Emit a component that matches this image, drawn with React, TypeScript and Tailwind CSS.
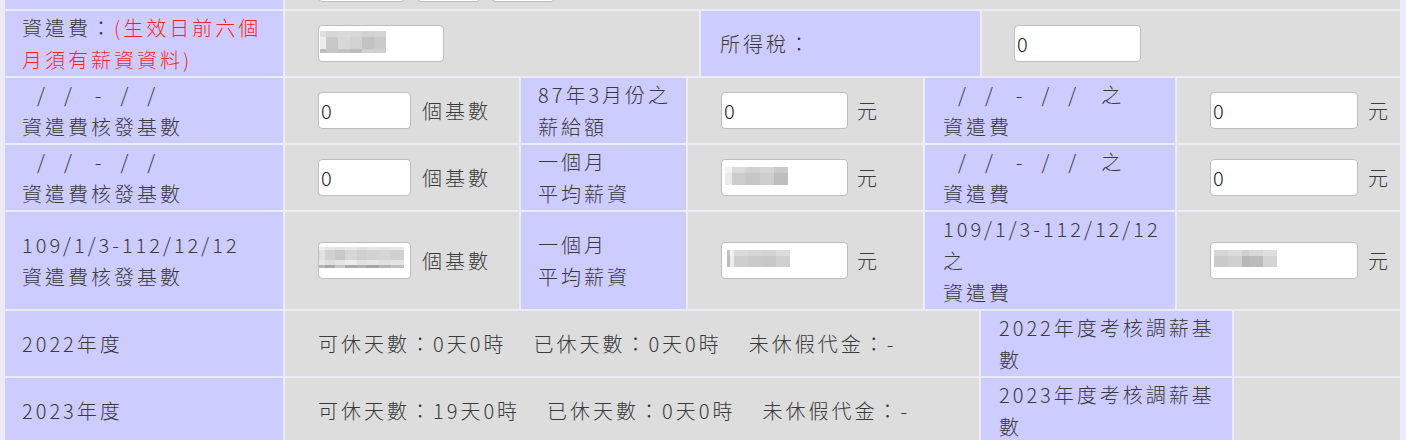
import React from "react";

type MosaicSpec = { cols: number[]; rows: number[]; colors: string[][] };

function Mosaic({ spec }: { spec: MosaicSpec }) {
  return (
    <div className="flex flex-col">
      {spec.rows.map((h, r) => (
        <div key={r} className="flex">
          {spec.cols.map((w, c) => (
            <span key={c} style={{ width: w, height: h, background: spec.colors[r][c] }} />
          ))}
        </div>
      ))}
    </div>
  );
}

function Field({ w, value }: { w: string; value: string }) {
  return (
    <input
      readOnly
      value={value}
      className={`${w} h-[37px] shrink-0 rounded-[4px] border border-[#bdbdbd] bg-white px-[2px] text-[20px] text-[#222] outline-none`}
    />
  );
}

function BlurField({ w, pl, pt, spec }: { w: string; pl: string; pt: string; spec: MosaicSpec }) {
  return (
    <div className={`${w} ${pl} ${pt} h-[37px] shrink-0 rounded-[4px] border border-[#bdbdbd] bg-white`}>
      <Mosaic spec={spec} />
    </div>
  );
}

function DateSpan({ suffix }: { suffix?: string }) {
  return (
    <div className="flex whitespace-nowrap">
      <span className="ml-[15px]">/</span>
      <span className="ml-[16px]">/</span>
      <span className="ml-[20px]">-</span>
      <span className="ml-[16px]">/</span>
      <span className="ml-[16px]">/</span>
      {suffix ? <span className="ml-[22px]">{suffix}</span> : null}
    </div>
  );
}

const m1: MosaicSpec = {
  cols: [6, 12, 12, 12, 12, 12],
  rows: [6, 12, 4],
  colors: [
    ["#dedede", "#d6d6d6", "#dadada", "#d8d8d8", "#d2d2d2", "#d5d5d5"],
    ["#ececec", "#c8c8c8", "#d8d8d8", "#d2d2d2", "#c2c2c2", "#cacaca"],
    ["#bdbdbd", "#c6c6c6", "#c2c2c2", "#bcbcbc", "#d0d0d0", "#cfcfcf"],
  ],
};

const m3d: MosaicSpec = {
  cols: [7, 14, 14, 14, 14],
  rows: [6, 12],
  colors: [
    ["#f3f3f3", "#dadada", "#d2d2d2", "#d6d6d6", "#cacaca"],
    ["#eaeaea", "#cccccc", "#c6c6c6", "#cecece", "#bdbdbd"],
  ],
};

const m4b: MosaicSpec = {
  cols: [6, 10, 10, 12, 10, 12, 12, 13],
  rows: [3, 10, 5, 3],
  colors: [
    ["#eeeeee", "#e6e6e6", "#e2e2e2", "#e8e8e8", "#e0e0e0", "#e6e6e6", "#e4e4e4", "#e8e8e8"],
    ["#e0e0e0", "#d0d0d0", "#c8c8c8", "#d6d6d6", "#cfcfcf", "#d2d2d2", "#d4d4d4", "#d0d0d0"],
    ["#e8e8e8", "#dedede", "#e4e4e4", "#ececec", "#e2e2e2", "#e6e6e6", "#e0e0e0", "#e4e4e4"],
    ["#b8b8b8", "#a8a8a8", "#c8c8c8", "#aaaaaa", "#b0b0b0", "#a4a4a4", "#b4b4b4", "#c0c0c0"],
  ],
};

const m4d: MosaicSpec = {
  cols: [3, 4, 14, 14, 14, 14],
  rows: [6, 11],
  colors: [
    ["#c4c4c4", "#f2f2f2", "#dadada", "#d6d6d6", "#d4d4d4", "#dcdcdc"],
    ["#bcbcbc", "#eeeeee", "#cecece", "#cacaca", "#c8c8c8", "#d0d0d0"],
  ],
};

const m4f: MosaicSpec = {
  cols: [14, 14, 7, 14, 14],
  rows: [6, 11],
  colors: [
    ["#d6d6d6", "#dcdcdc", "#d0d0d0", "#d8d8d8", "#dedede"],
    ["#cacaca", "#d0d0d0", "#b8b8b8", "#bcbcbc", "#d4d4d4"],
  ],
};

const purple = "bg-[#ccccff]";
const grey = "bg-[#dddddd]";

export default function App() {
  return (
    <div className="w-[1406px] min-h-[440px] bg-[#ebebfa] pl-[5px] pr-[6px] flex flex-col gap-[2px] font-['Noto_Sans_CJK_TC','Noto_Sans_CJK_JP',sans-serif] font-light text-[20px] leading-[32px] tracking-[3px] text-[#3a3a3a]">
      {/* row 0 (cut off) */}
      <div className="flex h-[9px] gap-[2px]">
        <div className={`${purple} w-[278px] shrink-0`} />
        <div className={`${grey} flex-1 flex items-end gap-[12px] pl-[33px] overflow-hidden`}>
          <div className="h-[37px] w-[87px] shrink-0 mb-[7px] rounded-[4px] border border-[#bdbdbd] bg-white" />
          <div className="h-[37px] w-[63px] shrink-0 mb-[7px] rounded-[4px] border border-[#bdbdbd] bg-white" />
          <div className="h-[37px] w-[63px] shrink-0 mb-[7px] rounded-[4px] border border-[#bdbdbd] bg-white" />
        </div>
      </div>

      {/* row 1 */}
      <div className="flex h-[65px] gap-[2px]">
        <div className={`${purple} w-[278px] shrink-0 pl-[17px] flex flex-col justify-center whitespace-nowrap`}>
          <div>
            資遣費：<span className="text-[#ff1f1f]">(生效日前六個</span>
          </div>
          <div className="text-[#ff1f1f]">月須有薪資資料)</div>
        </div>
        <div className={`${grey} w-[414px] shrink-0 pl-[33px] flex items-center`}>
          <BlurField w="w-[126px]" pl="pl-[1px]" pt="pt-[5px]" spec={m1} />
        </div>
        <div className={`${purple} w-[279px] shrink-0 pl-[19px] flex items-center`}>所得稅：</div>
        <div className={`${grey} flex-1 pl-[32px] flex items-center`}>
          <Field w="w-[127px]" value="0" />
        </div>
      </div>

      {/* row 2 */}
      <div className="flex h-[65px] gap-[2px]">
        <div className={`${purple} w-[278px] shrink-0 pl-[17px] flex flex-col justify-center`}>
          <DateSpan />
          <div>資遣費核發基數</div>
        </div>
        <div className={`${grey} w-[234px] shrink-0 pl-[33px] flex items-center gap-[11px] whitespace-nowrap`}>
          <Field w="w-[93px]" value="0" />
          <span>個基數</span>
        </div>
        <div className={`${purple} w-[165px] shrink-0 pl-[17px] flex flex-col justify-center whitespace-nowrap`}>
          <div>87年3月份之</div>
          <div>薪給額</div>
        </div>
        <div className={`${grey} w-[235px] shrink-0 pl-[33px] flex items-center gap-[9px]`}>
          <Field w="w-[127px]" value="0" />
          <span>元</span>
        </div>
        <div className={`${purple} w-[250px] shrink-0 pl-[18px] flex flex-col justify-center`}>
          <DateSpan suffix="之" />
          <div>資遣費</div>
        </div>
        <div className={`${grey} flex-1 pl-[33px] flex items-center gap-[10px]`}>
          <Field w="w-[148px]" value="0" />
          <span>元</span>
        </div>
      </div>

      {/* row 3 */}
      <div className="flex h-[65px] gap-[2px]">
        <div className={`${purple} w-[278px] shrink-0 pl-[17px] flex flex-col justify-center`}>
          <DateSpan />
          <div>資遣費核發基數</div>
        </div>
        <div className={`${grey} w-[234px] shrink-0 pl-[33px] flex items-center gap-[11px] whitespace-nowrap`}>
          <Field w="w-[93px]" value="0" />
          <span>個基數</span>
        </div>
        <div className={`${purple} w-[165px] shrink-0 pl-[17px] flex flex-col justify-center whitespace-nowrap`}>
          <div>一個月</div>
          <div>平均薪資</div>
        </div>
        <div className={`${grey} w-[235px] shrink-0 pl-[33px] flex items-center gap-[9px]`}>
          <BlurField w="w-[127px]" pl="pl-[3px]" pt="pt-[7px]" spec={m3d} />
          <span>元</span>
        </div>
        <div className={`${purple} w-[250px] shrink-0 pl-[18px] flex flex-col justify-center`}>
          <DateSpan suffix="之" />
          <div>資遣費</div>
        </div>
        <div className={`${grey} flex-1 pl-[33px] flex items-center gap-[10px]`}>
          <Field w="w-[148px]" value="0" />
          <span>元</span>
        </div>
      </div>

      {/* row 4 */}
      <div className="flex h-[97px] gap-[2px]">
        <div className={`${purple} w-[278px] shrink-0 pl-[17px] flex flex-col justify-center whitespace-nowrap`}>
          <div>109/1/3-112/12/12</div>
          <div>資遣費核發基數</div>
        </div>
        <div className={`${grey} w-[234px] shrink-0 pl-[33px] flex items-center gap-[11px] whitespace-nowrap`}>
          <BlurField w="w-[93px]" pl="pl-[0px]" pt="pt-[4px]" spec={m4b} />
          <span>個基數</span>
        </div>
        <div className={`${purple} w-[165px] shrink-0 pl-[17px] flex flex-col justify-center whitespace-nowrap`}>
          <div>一個月</div>
          <div>平均薪資</div>
        </div>
        <div className={`${grey} w-[235px] shrink-0 pl-[33px] flex items-center gap-[9px]`}>
          <BlurField w="w-[127px]" pl="pl-[5px]" pt="pt-[7px]" spec={m4d} />
          <span>元</span>
        </div>
        <div className={`${purple} w-[250px] shrink-0 pl-[18px] flex flex-col justify-center whitespace-nowrap`}>
          <div>109/1/3-112/12/12</div>
          <div>之</div>
          <div>資遣費</div>
        </div>
        <div className={`${grey} flex-1 pl-[33px] flex items-center gap-[10px]`}>
          <BlurField w="w-[148px]" pl="pl-[3px]" pt="pt-[7px]" spec={m4f} />
          <span>元</span>
        </div>
      </div>

      {/* row 5 */}
      <div className="flex h-[65px] gap-[2px]">
        <div className={`${purple} w-[278px] shrink-0 pl-[17px] flex items-center`}>2022年度</div>
        <div className={`${grey} w-[694px] shrink-0 pl-[33px] flex items-center gap-[27px] whitespace-nowrap`}>
          <span>可休天數：0天0時</span>
          <span>已休天數：0天0時</span>
          <span>未休假代金：-</span>
        </div>
        <div className={`${purple} w-[251px] shrink-0 pl-[18px] flex flex-col justify-center whitespace-nowrap`}>
          <div>2022年度考核調薪基</div>
          <div>數</div>
        </div>
        <div className={`${grey} flex-1`} />
      </div>

      {/* row 6 */}
      <div className="flex h-[65px] gap-[2px]">
        <div className={`${purple} w-[278px] shrink-0 pl-[17px] flex items-center`}>2023年度</div>
        <div className={`${grey} w-[694px] shrink-0 pl-[33px] flex items-center gap-[27px] whitespace-nowrap`}>
          <span>可休天數：19天0時</span>
          <span>已休天數：0天0時</span>
          <span>未休假代金：-</span>
        </div>
        <div className={`${purple} w-[251px] shrink-0 pl-[18px] flex flex-col justify-center whitespace-nowrap`}>
          <div>2023年度考核調薪基</div>
          <div>數</div>
        </div>
        <div className={`${grey} flex-1`} />
      </div>
    </div>
  );
}
